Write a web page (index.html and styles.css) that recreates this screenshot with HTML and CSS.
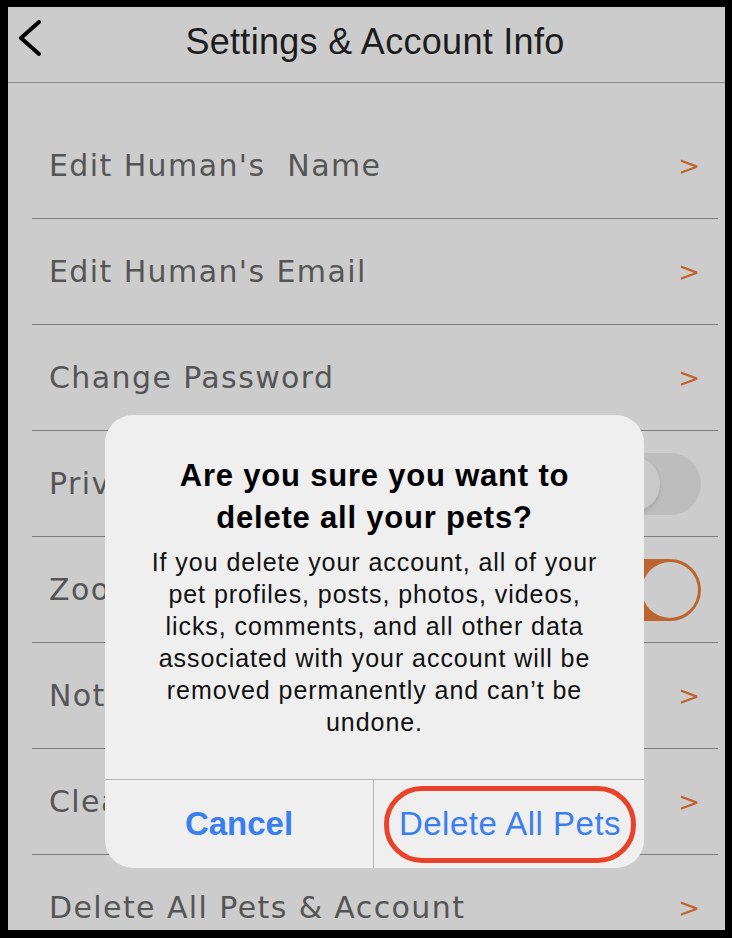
FILE: index.html
```html
<!DOCTYPE html>
<html lang="en">
<head>
    <meta charset="UTF-8">
    <meta name="viewport" content="width=device-width, initial-scale=1.0">
    <title>Settings &amp; Account Info</title>
    <link rel="stylesheet" href="styles.css">
</head>
<body>
    <div class="phone">

        <div class="header">
            <svg class="back" width="28" height="40" viewBox="0 0 28 40">
                <polyline points="23,2 5,18 23,34" fill="none" stroke="#000" stroke-width="4" stroke-linecap="round" stroke-linejoin="round"/>
            </svg>
            <div class="title">Settings &amp; Account Info</div>
        </div>

        <div class="list">
            <div class="row"><span class="label">Edit Human's &nbsp;Name</span><span class="arrow">&gt;</span></div>
            <div class="row"><span class="label">Edit Human's Email</span><span class="arrow">&gt;</span></div>
            <div class="row"><span class="label">Change Password</span><span class="arrow">&gt;</span></div>
            <div class="row"><span class="label">Private Profile</span><span class="switch"><span class="knob"></span></span></div>
            <div class="row"><span class="label">Zoomies Mode</span><span class="switch on"><span class="knob"></span></span></div>
            <div class="row"><span class="label">Notifications</span><span class="arrow">&gt;</span></div>
            <div class="row"><span class="label">Clear Search History</span><span class="arrow">&gt;</span></div>
            <div class="row"><span class="label">Delete All Pets &amp; Account</span><span class="arrow">&gt;</span></div>
        </div>

        <div class="alert">
            <div class="alert-body">
                <div class="alert-title">Are you sure you want to<br>delete all your pets?</div>
                <div class="alert-text">
                    If you delete your account, all of your<br>
                    pet profiles, posts, photos, videos,<br>
                    licks, comments, and all other data<br>
                    associated with your account will be<br>
                    removed permanently and can’t be<br>
                    undone.
                </div>
            </div>
            <div class="alert-buttons">
                <div class="btn cancel">Cancel</div>
                <div class="btn delete"><span class="circled">Delete All Pets</span></div>
            </div>
        </div>

    </div>
</body>
</html>
```

FILE: styles.css
```css
html, body {
    margin: 0;
    padding: 0;
    background: #000;
}

.phone {
    position: relative;
    width: 717px;
    height: 923px;
    border-style: solid;
    border-color: #000;
    border-width: 7px 7px 8px 8px;
    background: #cccccc;
    overflow: hidden;
    font-family: "Liberation Sans", Arial, sans-serif;
}

.header {
    height: 75px;
    border-bottom: 1.5px solid #8a8a8a;
    display: flex;
    align-items: center;
    justify-content: center;
    position: relative;
}

.back {
    position: absolute;
    left: 8px;
    top: 13px;
}

.title {
    font-size: 36px;
    letter-spacing: 0.3px;
    color: #1c1c1c;
    margin: -6px 0 0 17px;
}

.list {
    padding: 30px 7px 0 24px;
}

.row {
    height: 105px;
    border-bottom: 1.5px solid #7c7c7c;
    display: flex;
    align-items: center;
    justify-content: space-between;
    padding: 0 18px 0 17px;
}

.label {
    font-family: "DejaVu Sans", sans-serif;
    font-size: 30px;
    color: #555;
    letter-spacing: 1.4px;
}

.arrow {
    font-family: "DejaVu Sans", sans-serif;
    font-size: 26px;
    color: #c0642d;
}

.switch {
    width: 100px;
    height: 62px;
    border-radius: 31px;
    background: #bdbdbd;
    margin-right: -1px;
    position: relative;
}

.switch .knob {
    position: absolute;
    top: 3px;
    left: 3px;
    width: 56px;
    height: 56px;
    border-radius: 50%;
    background: #c9c9c9;
    box-shadow: 0 2px 4px rgba(0, 0, 0, 0.15);
}

.switch.on {
    background: #bd6530;
}

.switch.on .knob {
    left: auto;
    right: 3px;
    background: #cccccc;
    box-shadow: none;
}

/* alert dialog over the list */
.alert {
    position: absolute;
    left: 97px;
    top: 408px;
    width: 539px;
    height: 453px;
    border-radius: 28px;
    background: #efefef;
    display: flex;
    flex-direction: column;
    overflow: hidden;
}

.alert-body {
    flex: 1;
    padding-top: 40px;
    text-align: center;
    border-bottom: 1.5px solid #b4b4b4;
}

.alert-title {
    font-size: 31px;
    font-weight: bold;
    line-height: 42px;
    letter-spacing: 0.8px;
    color: #000;
}

.alert-text {
    font-size: 25px;
    line-height: 32px;
    letter-spacing: 0.95px;
    color: #111;
    margin-top: 7px;
}

.alert-buttons {
    height: 88px;
    display: flex;
}

.btn {
    flex: 1;
    display: flex;
    align-items: center;
    justify-content: center;
    font-size: 33px;
    color: #3a7ff2;
}

.cancel {
    font-weight: bold;
    border-right: 1.5px solid #b4b4b4;
}

.delete {
    letter-spacing: 0.5px;
    padding-left: 2px;
}

.circled {
    border: 5px solid #e8432a;
    border-radius: 38px;
    padding: 14px 10px 15px;
}
```
